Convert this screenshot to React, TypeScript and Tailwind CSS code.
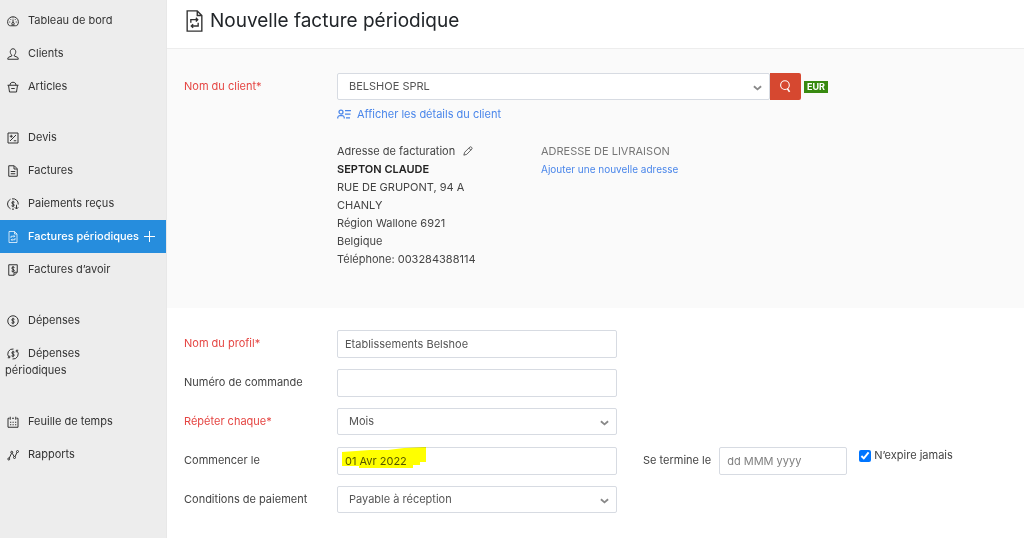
import clsx from "clsx";
import type { FC, ReactNode } from "react";

type IconProps = { className?: string };

const Svg: FC<{ className?: string; children: ReactNode }> = ({ className, children }) => (
  <svg
    viewBox="0 0 24 24"
    fill="none"
    stroke="currentColor"
    strokeWidth="2"
    className={className}
    aria-hidden="true"
  >
    {children}
  </svg>
);

const DashboardIcon: FC<IconProps> = ({ className }) => (
  <Svg className={className}>
    <path d="M3.500 20.500A10.800 10.500 0 1 1 20.500 20.500Q19 21.500 17 21.500H7Q5 21.500 3.500 20.500Z" />
    <path d="M12 9v6" />
    <circle cx="12" cy="17.500" r="2.500" />
    <path d="M4.500 14h2M17.500 14h2M6.500 8l1.500 1.500M17.500 8L16 9.500M12 5v1.500" />
  </Svg>
);

const ClientIcon: FC<IconProps> = ({ className }) => (
  <Svg className={className}>
    <path d="M9.500 14C7.500 12.500 6.500 10 6.500 7.500C6.500 4 9 1.500 12 1.500S17.500 4 17.500 7.500C17.500 10 16.500 12.500 14.500 14V16L21 18.500Q22.500 19.500 22.500 22.500H1.500Q1.500 19.500 3 18.500L9.500 16Z" />
  </Svg>
);

const BasketIcon: FC<IconProps> = ({ className }) => (
  <Svg className={className}>
    <path d="M1 8.500h22M3 8.500l2 13.500h14l2-13.500M6 8.500C6 4.500 8.500 2.500 12 2.500s6 2 6 6M8.500 15h7" />
  </Svg>
);

const QuoteIcon: FC<IconProps> = ({ className }) => (
  <Svg className={className}>
    <path d="M2 2h20v20H2zM6 18L18 6M5.500 8.500h6M8.500 5.500v6M13.500 17.500h5" />
  </Svg>
);

const InvoiceIcon: FC<IconProps> = ({ className }) => (
  <Svg className={className}>
    <path d="M3.500 1.500h11l6 6v15h-17zM14 2v6h6M7.500 13h9M7.500 17.500h9" />
  </Svg>
);

const PaymentIcon: FC<IconProps> = ({ className }) => (
  <Svg className={className}>
    <path d="M7 21.500A10.500 10.500 0 0 1 7 2.500M10 1.700A10.500 10.500 0 0 1 22.500 13M10 22.300h4M19 13.500v8M15.500 18.500l3.500 3.500 3.500-3.500" />
    <path d="M15 8.500Q12 6.500 10 8.500T12 12T14 15.500T9 15.500M12 5.500v13" />
  </Svg>
);

const RecurringIcon: FC<IconProps> = ({ className }) => (
  <svg
    viewBox="0 0 18 24"
    fill="none"
    stroke="currentColor"
    strokeWidth="1.5"
    className={className}
    aria-hidden="true"
  >
    <path d="M1 1h11l5 5v17H1zM12 1v5h5" />
    <path d="M5 14v-3.500h7.500M10.500 8.500l2 2-2 2M13 14v3.500H5.500M7.500 15.500l-2 2 2 2" />
  </svg>
);

const CreditNoteIcon: FC<IconProps> = ({ className }) => (
  <Svg className={className}>
    <path d="M3.500 1.500h17v15l-6 6h-11zM20 16.500h-6v5.500" />
    <path d="M15 7Q12 5 10 7T12 10.500T14 14T9 14M12 4v13" />
  </Svg>
);

const ExpenseIcon: FC<IconProps> = ({ className }) => (
  <Svg className={className}>
    <circle cx="12" cy="12" r="10.500" />
    <path d="M15 8.500Q12 6.500 10 8.500T12 12T14 15.500T9 15.500M12 5.500v13" />
  </Svg>
);

const RecurringExpenseIcon: FC<IconProps> = ({ className }) => (
  <Svg className={className}>
    <path d="M13 2A10 10 0 0 0 4.500 19M1.500 19.500h4v-4M11 22A10 10 0 0 0 19.500 5M22.500 4.500h-4v4" />
    <path d="M15 8.500Q12 6.500 10 8.500T12 12T14 15.500T9 15.500M12 5.500v13" />
  </Svg>
);

const TimesheetIcon: FC<IconProps> = ({ className }) => (
  <Svg className={className}>
    <path d="M5 4.500H2v18h20v-18h-3M6.500 1.500v6M17.500 1.500v6M10 4.500h4" />
    <path d="M6 12.500h2.500M11 12.500h2.500M16 12.500h2.500M6 17.500h2.500M11 17.500h2.500M16 17.500h2.500" />
  </Svg>
);

const ReportIcon: FC<IconProps> = ({ className }) => (
  <Svg className={className}>
    <path d="M4.500 18.500L9 8.500M10.500 8.500l4 7M16 15.500l4-9" />
    <circle cx="3.500" cy="20" r="2" />
    <circle cx="9.500" cy="6.500" r="2" />
    <circle cx="15" cy="17" r="2" />
    <circle cx="21" cy="5" r="2" />
  </Svg>
);

const ContactIcon: FC<IconProps> = ({ className }) => (
  <svg
    viewBox="0 0 28 20"
    fill="none"
    stroke="currentColor"
    strokeWidth="2.5"
    className={className}
    aria-hidden="true"
  >
    <circle cx="8" cy="6" r="4" />
    <path d="M1.500 19v-2Q2 13 5.500 13h5Q14 13 14.500 17v2M16 3h12M16 10h11M18 17.500h8" />
  </svg>
);

const PencilIcon: FC<IconProps> = ({ className }) => (
  <Svg className={className}>
    <path d="M2 22l2-7L16.500 2.500Q18.500 1 20.500 3T21.500 7L9 20zM14 5l5 5" />
  </Svg>
);

const SearchIcon: FC<IconProps> = ({ className }) => (
  <Svg className={className}>
    <circle cx="11" cy="9.500" r="8" />
    <path d="M15.500 16l4 6" strokeWidth="3" />
  </Svg>
);

const ChevronIcon: FC<IconProps> = ({ className }) => (
  <svg
    viewBox="0 0 10 6"
    fill="none"
    stroke="currentColor"
    strokeWidth="2"
    className={className}
    aria-hidden="true"
  >
    <path d="M1 1l4 3.500L9 1" />
  </svg>
);

const groups = [
  [
    { label: "Tableau de bord", Icon: DashboardIcon },
    { label: "Clients", Icon: ClientIcon },
    { label: "Articles", Icon: BasketIcon },
  ],
  [
    { label: "Devis", Icon: QuoteIcon },
    { label: "Factures", Icon: InvoiceIcon },
    { label: "Paiements reçus", Icon: PaymentIcon },
    { label: "Factures périodiques", Icon: RecurringIcon, active: true },
    { label: "Factures d’avoir", Icon: CreditNoteIcon },
  ],
  [
    { label: "Dépenses", Icon: ExpenseIcon },
    { label: "Dépenses périodiques", Icon: RecurringExpenseIcon },
  ],
  [
    { label: "Feuille de temps", Icon: TimesheetIcon },
    { label: "Rapports", Icon: ReportIcon },
  ],
];

const Sidebar: FC = () => (
  <nav className="w-[167px] shrink-0 border-r border-[#e8e8e8] bg-[#ededed] pt-1 flex flex-col gap-[18px] text-[#333]">
    {groups.map((items, i) => (
      <ul key={i}>
        {items.map(({ label, Icon, active }: any) => (
          <li key={label} className={clsx("relative", active && "bg-[#268ddd] text-white font-medium")}>
            <a href="#" className={clsx("block py-2 pl-[5px] leading-[17px]", !active && "pr-10")}>
              <Icon className="inline-block align-[-3px] w-3 h-3 ml-[2px] mr-[9px]" />
              {label}
            </a>
            {active && (
              <button
                type="button"
                aria-label="Ajouter"
                className="absolute right-[11px] top-[11px] w-[11px] h-[11px]"
              >
                <svg viewBox="0 0 11 11" stroke="currentColor" className="w-full h-full">
                  <path d="M5.500 0v11M0 5.500h11" />
                </svg>
              </button>
            )}
          </li>
        ))}
      </ul>
    ))}
  </nav>
);

const field = "w-full border border-[#d7dbe2] rounded-[2px] bg-white text-[#555] outline-none";

const Select: FC<{ id: string; value: string }> = ({ id, value }) => (
  <div className="relative w-full">
    <select id={id} className={clsx(field, "block h-[27px] appearance-none pl-[11px] pr-6")}>
      <option>{value}</option>
    </select>
    <ChevronIcon className="absolute right-2 top-[12px] w-[9px] h-[6px] text-[#888] pointer-events-none" />
  </div>
);

const Row: FC<{ id: string; label: string; required?: boolean; extra?: ReactNode; children: ReactNode }> = ({
  id,
  label,
  required,
  extra,
  children,
}) => (
  <div className="flex items-center h-[39px]">
    <label htmlFor={id} className={clsx("w-[153px] shrink-0", required && "text-[#e54643]")}>
      {label}
      {required && "*"}
    </label>
    <div className="relative w-1/3">{children}</div>
    {extra}
  </div>
);

const App: FC = () => {
  return (
    <div className="flex min-h-screen bg-white font-['Inter',sans-serif] text-[11px] text-[#444]">
      <Sidebar />
      <main className="flex-1 min-w-0">
        <header className="flex items-center gap-[7px] h-[49px] pl-[19px] pb-[6px] border-b border-[#ededed]">
          <RecurringIcon className="w-[17px] h-[22px] text-[#333]" />
          <h1 className="text-[19px] text-[#212529]">Nouvelle facture périodique</h1>
        </header>

        <section className="bg-[#fafafa] pl-[17px] pt-6 pb-10">
          <div className="flex items-start">
            <label htmlFor="client" className="w-[153px] shrink-0 leading-[27px] text-[#e54643]">
              Nom du client*
            </label>
            <div className="flex-1 min-w-0">
              <div className="flex items-center">
                <div className="flex w-[464px]">
                  <Select id="client" value="BELSHOE SPRL" />
                  <button
                    type="button"
                    aria-label="Rechercher"
                    className="w-[31px] h-[27px] shrink-0 rounded-r-[2px] bg-[#d64830] text-white flex items-center justify-center"
                  >
                    <SearchIcon className="w-[13px] h-[13px]" />
                  </button>
                </div>
                <span className="ml-[3px] px-[3px] h-3 leading-3 bg-[#388a10] text-white text-[9px] font-bold">
                  EUR
                </span>
              </div>
              <a href="#" className="flex items-center gap-[6px] mt-[5px] leading-[18px] text-[#4a86ea]">
                <ContactIcon className="w-[14px] h-[10px]" />
                Afficher les détails du client
              </a>
              <div className="flex mt-[19px] leading-[18px]">
                <address className="w-[204px] not-italic">
                  <p className="flex items-center gap-2">
                    Adresse de facturation
                    <button type="button" aria-label="Modifier">
                      <PencilIcon className="block w-[10px] h-[10px]" />
                    </button>
                  </p>
                  <p className="font-semibold text-[#222]">SEPTON CLAUDE</p>
                  <p>RUE DE GRUPONT, 94 A</p>
                  <p>CHANLY</p>
                  <p>Région Wallone 6921</p>
                  <p>Belgique</p>
                  <p>Téléphone: 003284388114</p>
                </address>
                <div>
                  <p className="text-[#777]">ADRESSE DE LIVRAISON</p>
                  <a href="#" className="block text-[10px] text-[#4a86ea]">
                    Ajouter une nouvelle adresse
                  </a>
                </div>
              </div>
            </div>
          </div>
        </section>

        <form className="pl-[17px] pt-4">
          <Row id="profile" label="Nom du profil" required>
            <input id="profile" defaultValue="Etablissements Belshoe" className={clsx(field, "block h-7 px-[7px]")} />
          </Row>
          <Row id="order" label="Numéro de commande">
            <input id="order" className={clsx(field, "block h-7 px-[7px]")} />
          </Row>
          <Row id="repeat" label="Répéter chaque" required>
            <Select id="repeat" value="Mois" />
          </Row>
          <Row
            id="start"
            label="Commencer le"
            extra={
              <>
                <label htmlFor="end" className="ml-[26px] mr-2 whitespace-nowrap">
                  Se termine le
                </label>
                <div className="w-[128px]">
                  <input
                    id="end"
                    placeholder="dd MMM yyyy"
                    className={clsx(field, "block h-7 px-[7px] placeholder:text-[#808080]")}
                  />
                </div>
                <label className="flex items-center gap-[3px] ml-3 pb-[10px] whitespace-nowrap">
                  <input type="checkbox" defaultChecked className="w-[12px] h-[12px] accent-[#0075ff]" />
                  N’expire jamais
                </label>
              </>
            }
          >
            <input id="start" defaultValue="01 Avr 2022" className={clsx(field, "block h-7 px-[7px]")} />
            {/* highlighter stroke over the date */}
            <svg
              viewBox="0 0 84 22"
              className="absolute left-[5px] top-0 w-[84px] h-[22px] mix-blend-multiply pointer-events-none"
              aria-hidden="true"
            >
              <path d="M0 5L28 3L46 3L62 1L84 0V15H78V18H71V21H17V19H0Z" fill="#ffff00" />
            </svg>
          </Row>
          <Row id="terms" label="Conditions de paiement">
            <Select id="terms" value="Payable à réception" />
          </Row>
        </form>
      </main>
    </div>
  );
};

export default App;
